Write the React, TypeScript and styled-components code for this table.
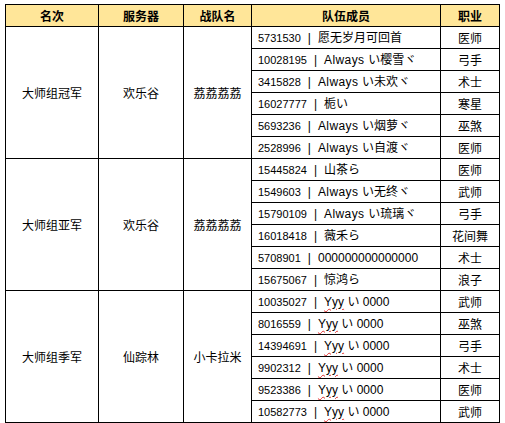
import React from "react";
import styled, { createGlobalStyle } from "styled-components";

const Global = createGlobalStyle`
  html, body { margin: 0; padding: 0; background: #ffffff; }
  body { padding: 4px 0 0 5px; }
`;

const Table = styled.table`
  border-collapse: collapse;
  table-layout: fixed;
  width: 494px;
  font-family: "Liberation Sans", "Noto Sans CJK SC", sans-serif;
  font-size: 12px;
  color: #000;
`;

const HeadCell = styled.th`
  background: #ffe699;
  border: 1px solid #000;
  font-weight: bold;
  font-size: 12px;
  text-align: center;
  padding: 0;
  font-family: "Noto Sans CJK SC", sans-serif;
`;

const Row = styled.tr`
  height: 22px;
`;

const GroupCell = styled.td`
  border: 1px solid #000;
  text-align: center;
  vertical-align: middle;
  padding: 0;
  font-family: "Noto Sans CJK SC", sans-serif;
`;

const MemberCell = styled.td`
  border: 1px solid #000;
  padding: 0 0 0 6px;
  white-space: nowrap;
  overflow: hidden;
  line-height: 20px;
`;

const Id = styled.span`
  font-size: 11px;
`;

const Sep = styled.span`
  margin: 0 7px;
  font-size: 12px;
`;

const Name = styled.span`
  font-size: 12px;
`;

const Latin = styled.span`
  letter-spacing: 0.4px;
`;

const Spell = styled.span`
  text-decoration: underline wavy #e03030;
  text-decoration-thickness: 1px;
  text-underline-offset: 2px;
`;

const JobCell = styled.td`
  border: 1px solid #000;
  text-align: center;
  padding: 0;
  font-family: "Noto Sans CJK SC", sans-serif;
`;

type Member = { id: string; prefix?: string; name: string; job: string; spell?: boolean };
type Group = { rank: string; server: string; team: string; members: Member[] };

const groups: Group[] = [
  {
    rank: "大师组冠军",
    server: "欢乐谷",
    team: "荔荔荔荔",
    members: [
      { id: "5731530", name: "愿无岁月可回首", job: "医师" },
      { id: "10028195", prefix: "Always ", name: "い樱雪ヾ", job: "弓手" },
      { id: "3415828", prefix: "Always ", name: "い未欢ヾ", job: "术士" },
      { id: "16027777", name: "栀い", job: "寒星" },
      { id: "5693236", prefix: "Always ", name: "い烟萝ヾ", job: "巫煞" },
      { id: "2528996", prefix: "Always ", name: "い自渡ヾ", job: "医师" },
    ],
  },
  {
    rank: "大师组亚军",
    server: "欢乐谷",
    team: "荔荔荔荔",
    members: [
      { id: "15445824", name: "山茶ら", job: "医师" },
      { id: "1549603", prefix: "Always ", name: "い无终ヾ", job: "武师" },
      { id: "15790109", prefix: "Always ", name: "い琉璃ヾ", job: "弓手" },
      { id: "16018418", name: "薇禾ら", job: "花间舞" },
      { id: "5708901", name: "000000000000000", job: "术士" },
      { id: "15675067", name: "惊鸿ら", job: "浪子" },
    ],
  },
  {
    rank: "大师组季军",
    server: "仙踪林",
    team: "小卡拉米",
    members: [
      { id: "10035027", name: "い 0000", job: "武师", spell: true },
      { id: "8016559", name: "い 0000", job: "巫煞", spell: true },
      { id: "14394691", name: "い 0000", job: "弓手", spell: true },
      { id: "9902312", name: "い 0000", job: "术士", spell: true },
      { id: "9523386", name: "い 0000", job: "医师", spell: true },
      { id: "10582773", name: "い 0000", job: "武师", spell: true },
    ],
  },
];

export default function App() {
  return (
    <>
      <Global />
      <Table>
        <colgroup>
          <col style={{ width: 93 }} />
          <col style={{ width: 85 }} />
          <col style={{ width: 68 }} />
          <col style={{ width: 189 }} />
          <col style={{ width: 59 }} />
        </colgroup>
        <thead>
          <Row>
            <HeadCell>名次</HeadCell>
            <HeadCell>服务器</HeadCell>
            <HeadCell>战队名</HeadCell>
            <HeadCell>队伍成员</HeadCell>
            <HeadCell>职业</HeadCell>
          </Row>
        </thead>
        <tbody>
          {groups.map((g) =>
            g.members.map((m, i) => (
              <Row key={g.rank + m.id}>
                {i === 0 && (
                  <>
                    <GroupCell rowSpan={g.members.length}>{g.rank}</GroupCell>
                    <GroupCell rowSpan={g.members.length}>{g.server}</GroupCell>
                    <GroupCell rowSpan={g.members.length}>{g.team}</GroupCell>
                  </>
                )}
                <MemberCell>
                  <Id>{m.id}</Id>
                  <Sep>|</Sep>
                  <Name>
                    {m.prefix && <Latin>{m.prefix}</Latin>}
                    {m.spell && <Spell>Yyy</Spell>}
                    {m.spell ? " " : ""}
                    {m.name}
                  </Name>
                </MemberCell>
                <JobCell>{m.job}</JobCell>
              </Row>
            ))
          )}
        </tbody>
      </Table>
    </>
  );
}
